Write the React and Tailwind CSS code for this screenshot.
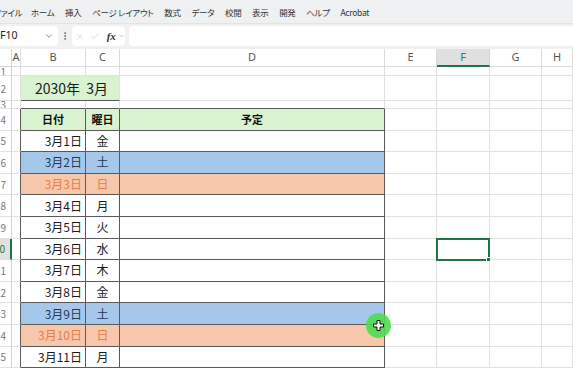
import { ChevronDown, X, Check, EllipsisVertical } from 'lucide-react';

const W = ['w-[12px]', 'w-[9px]', 'w-[65px]', 'w-[34px]', 'w-[265px]', 'w-[52px]', 'w-[53px]', 'w-[52px]', 'w-[31px]'];
const COLS = ['A', 'B', 'C', 'D', 'E', 'F', 'G', 'H'];
const MENU = ['ファイル', 'ホーム', '挿入', 'ページ レイアウト', '数式', 'データ', '校閲', '表示', '開発', 'ヘルプ', 'Acrobat'];

const days = [
  ['3月1日', '金', ''],
  ['3月2日', '土', 'sat'],
  ['3月3日', '日', 'sun'],
  ['3月4日', '月', ''],
  ['3月5日', '火', ''],
  ['3月6日', '水', ''],
  ['3月7日', '木', ''],
  ['3月8日', '金', ''],
  ['3月9日', '土', 'sat'],
  ['3月10日', '日', 'sun'],
  ['3月11日', '月', ''],
];

const grid = 'border-r border-b border-[#e1e1e1]';

function RowHead({ n, h, active }) {
  return (
    <div
      className={`${W[0]} ${h} shrink-0 flex items-center justify-end pr-[5px] overflow-hidden whitespace-nowrap text-[10px] border-b border-[#e1e1e1] ${
        active ? 'bg-[#e1e1e1] text-[#217346] border-r-2 border-r-[#217346]' : 'bg-white text-[#777] border-r border-r-[#d4d4d4]'
      }`}
    >
      {n}
    </div>
  );
}

function Blank({ i, h, extra = '' }) {
  return <div className={`${W[i]} ${h} shrink-0 ${extra || grid}`} />;
}

function TailCells({ h, from = 5, selected }) {
  const out = [];
  for (let i = from; i <= 8; i++) {
    if (selected && i === 6) {
      out.push(
        <div key={i} className={`${W[i]} ${h} shrink-0 ${grid} relative`}>
          <div className="absolute -left-[1px] -top-[1px] w-[54px] h-[23px] border-2 border-[#217346]">
            <div className="absolute -right-[3px] -bottom-[3px] w-[5px] h-[5px] bg-[#217346] border border-white" />
          </div>
        </div>
      );
    } else {
      out.push(<Blank key={i} i={i} h={h} />);
    }
  }
  return out;
}

function DayRow({ n, date, dow, kind }) {
  const h = 'h-[21.6px]';
  const fill = kind === 'sat' ? 'bg-[#a5c8ea]' : kind === 'sun' ? 'bg-[#f6c7ab]' : 'bg-white';
  const text = kind === 'sat' ? 'text-[#1f3a56]' : kind === 'sun' ? 'text-[#e97d48]' : 'text-[#1a1a1a]';
  const dark = 'border-r border-b border-[#5a5a5a]';
  return (
    <div className="flex">
      <RowHead n={n} h={h} active={n === 10} />
      <div className={`${W[1]} ${h} shrink-0 border-b border-[#e1e1e1] border-r border-r-[#5a5a5a]`} />
      <div className={`${W[2]} ${h} shrink-0 ${dark} ${fill} ${text} flex items-center justify-end pr-[3px] text-[12px]`}>{date}</div>
      <div className={`${W[3]} ${h} shrink-0 ${dark} ${fill} ${text} flex items-center justify-center text-[12px]`}>{dow}</div>
      <div className={`${W[4]} ${h} shrink-0 ${dark} ${fill}`} />
      <TailCells h={h} selected={n === 10} />
    </div>
  );
}

function MoveCursor() {
  return (
    <div className="absolute left-[366px] top-[313px] w-[25px] h-[25px] rounded-full bg-[#4fdc4f]/90 flex items-center justify-center">
      <svg width="11" height="11" viewBox="0 0 11 11">
        <path
          d="M4 0.5h3v3.5h3.5v3h-3.5v3.5h-3v-3.5h-3.5v-3h3.5z"
          fill="#fff"
          stroke="#111"
          strokeWidth="1"
          strokeLinejoin="round"
        />
      </svg>
    </div>
  );
}

export default function App() {
  return (
    <div className="w-[573px] h-[368px] overflow-hidden bg-white relative font-['Noto_Sans_CJK_JP','Noto_Sans',sans-serif] [font-feature-settings:'palt']">
      {/* ribbon tabs */}
      <div className="h-[23px] bg-[#eef0f2] flex items-center gap-[10.7px] text-[8.5px] tracking-[-0.3px] text-[#333] -ml-[6px] pt-[1px]">
        {MENU.map((m, i) => (
          <span key={m} className={`whitespace-nowrap ${i === 0 ? '-mr-[2px]' : ''}`}>{m}</span>
        ))}
      </div>

      {/* formula bar */}
      <div className="h-[25px] bg-[#f1f1f1] flex items-center border-t border-[#e4e4e4]">
        <div className="-ml-[6px] w-[64px] h-[20px] bg-white rounded-[4px] flex items-center pl-[6px] pr-[4px] text-[10.5px] text-[#222] font-['Noto_Sans',sans-serif]">
          <span className="flex-1">F10</span>
          <ChevronDown size={10} strokeWidth={1.5} className="text-[#444]" />
        </div>
        <EllipsisVertical size={10} strokeWidth={2} className="ml-[2px] text-[#555]" />
        <div className="ml-[2px] w-[53px] h-[20px] bg-white rounded-[4px] flex items-center pl-[3px] gap-[2px]">
          <X size={11} strokeWidth={1} className="text-[#aaa]" />
          <Check size={11} strokeWidth={1} className="text-[#aaa] ml-[3px]" />
          <span className="ml-[5px] text-[11px] italic font-bold font-['Liberation_Serif',serif] text-[#333] leading-none">fx</span>
          <ChevronDown size={8} strokeWidth={1.5} className="text-[#777]" />
        </div>
        <div className="ml-[4px] flex-1 h-[20px] bg-white rounded-l-[4px]" />
      </div>

      {/* column header */}
      <div className="flex bg-[#f1f1f1] pt-[1px]">
        <div className={`${W[0]} h-[18px] shrink-0 bg-white border-r border-b border-[#d4d4d4]`} />
        {COLS.map((c, i) => (
          <div
            key={c}
            className={`${W[i + 1]} h-[18px] shrink-0 flex items-center justify-center text-[11px] font-['Noto_Sans',sans-serif] ${
              c === 'F'
                ? 'bg-[#e0e0e0] text-[#2f7a4f] border-r border-[#d4d4d4] border-b-2 border-b-[#217346]'
                : 'bg-white text-[#555] border-r border-b border-[#dcdcdc]'
            }`}
          >
            {c}
          </div>
        ))}
      </div>

      {/* row 1 */}
      <div className="flex">
        <RowHead n={1} h="h-[9px]" />
        {[1, 2, 3, 4].map((i) => (
          <Blank key={i} i={i} h="h-[9px]" />
        ))}
        <TailCells h="h-[9px]" />
      </div>

      {/* row 2: title */}
      <div className="flex">
        <RowHead n={2} h="h-[25px]" />
        <Blank i={1} h="h-[25px]" />
        <div className="w-[99px] h-[25px] shrink-0 bg-[#d9f2d0] border-b border-b-[#5a5a5a] border-r border-r-[#e1e1e1] flex items-center justify-center pl-[3px] text-[14px] text-[#1a1a1a]">
          2030年&nbsp;&nbsp;3月
        </div>
        <Blank i={4} h="h-[25px]" />
        <TailCells h="h-[25px]" />
      </div>

      {/* row 3 */}
      <div className="flex">
        <RowHead n={3} h="h-[8px]" />
        <Blank i={1} h="h-[8px]" />
        <Blank i={2} h="h-[8px]" extra="border-r border-r-[#e1e1e1] border-b border-b-[#5a5a5a]" />
        <Blank i={3} h="h-[8px]" extra="border-r border-r-[#e1e1e1] border-b border-b-[#5a5a5a]" />
        <Blank i={4} h="h-[8px]" extra="border-r border-r-[#e1e1e1] border-b border-b-[#5a5a5a]" />
        <TailCells h="h-[8px]" />
      </div>

      {/* row 4: table header */}
      <div className="flex">
        <RowHead n={4} h="h-[21.6px]" />
        <div className={`${W[1]} h-[21.6px] shrink-0 border-b border-[#e1e1e1] border-r border-r-[#5a5a5a]`} />
        {[
          [2, '日付'],
          [3, '曜日'],
          [4, '予定'],
        ].map(([i, t]) => (
          <div
            key={i}
            className={`${W[i]} h-[21.6px] shrink-0 bg-[#d9f2d0] border-r border-b border-[#5a5a5a] flex items-center justify-center text-[11px] font-bold text-[#111]`}
          >
            {t}
          </div>
        ))}
        <TailCells h="h-[21.6px]" />
      </div>

      {days.map(([date, dow, kind], k) => (
        <DayRow key={date} n={k + 5} date={date} dow={dow} kind={kind} />
      ))}

      <MoveCursor />
    </div>
  );
}
